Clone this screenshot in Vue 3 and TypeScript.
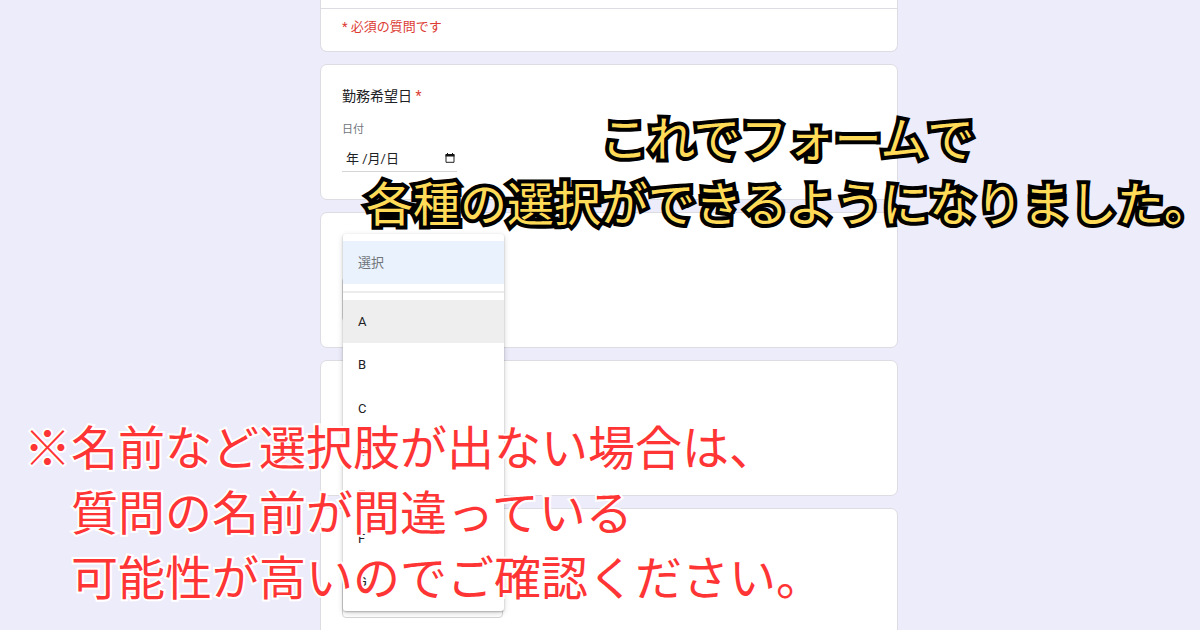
<script setup lang="ts">
import { ref } from 'vue'

const choices: string[] = ['A', 'B', 'C', 'D', 'E', 'F', 'G']
const highlighted = ref('A')
const dateValue = ref('年 /月/日')
</script>

<template>
  <main class="page">
    <form class="form" @submit.prevent>
      <section class="card intro">
        <p class="required-note">* 必須の質問です</p>
      </section>

      <section class="card question">
        <h2 class="title">勤務希望日 <span class="star">*</span></h2>
        <label class="hint" for="date">日付</label>
        <div class="date-field">
          <input id="date" v-model="dateValue" type="text" />
          <button type="button" class="calendar" aria-label="カレンダーを開く">
            <svg viewBox="0 0 10 10" aria-hidden="true">
              <path d="M1 2.2V9.3H9V2.2" fill="none" stroke="#222" stroke-width="1" />
              <path d="M.5 1H9.5V3.4H.5ZM2 0H3V1H2ZM7 0H8V1H7Z" fill="#111" />
            </svg>
          </button>
        </div>
      </section>

      <section class="card question">
        <div class="picker">
          <button type="button" class="select-box" aria-label="選択" aria-expanded="true"></button>
          <div class="menu" role="listbox" aria-label="選択">
            <button type="button" class="option placeholder" role="option" aria-selected="true">選択</button>
            <hr />
            <div class="choices">
              <button
                v-for="choice in choices"
                :key="choice"
                type="button"
                role="option"
                aria-selected="false"
                class="option"
                :class="{ active: highlighted === choice }"
                @mouseenter="highlighted = choice"
              >{{ choice }}</button>
            </div>
          </div>
        </div>
      </section>

      <section class="card question"></section>

      <section class="card question">
        <div class="picker">
          <button type="button" class="select-box" aria-label="選択"></button>
        </div>
      </section>
    </form>

    <p class="caption done">
      <span class="lead">これでフォームで</span>
      <span>各種の選択ができるようになりました。</span>
    </p>
    <p class="caption notice">
      <span>※名前など選択肢が出ない場合は、</span>
      <span class="indent">質問の名前が間違っている</span>
      <span class="indent">可能性が高いのでご確認ください。</span>
    </p>
  </main>
</template>

<style>
body {
  margin: 0;
  background: #edecfb;
}
</style>

<style scoped>
.page {
  position: relative;
  box-sizing: border-box;
  height: 100vh;
  padding-left: 18px;
  overflow: hidden;
  background: #edecfb;
  color: #202124;
  font-family: Roboto, "Noto Sans CJK JP", sans-serif;
}
.form {
  display: flex;
  flex-direction: column;
  gap: 12px;
  max-width: 578px;
  margin: 0 auto;
}
.card {
  box-sizing: border-box;
  background: #fff;
  border: 1px solid #dddce3;
  border-radius: 7px;
}
.intro {
  padding-top: 8px;
  border-top: 0;
  border-radius: 0 0 7px 7px;
}
.required-note {
  margin: 0;
  padding: 8px 21px 14px;
  border-top: 1px solid #dddce3;
  color: #dc3c34;
  font-size: 13px;
  line-height: 20px;
}
.question {
  min-height: 136px;
  padding: 21px;
}
.title {
  margin: 0 0 16px;
  font-size: 14px;
  line-height: 20px;
  font-weight: 400;
}
.star {
  color: #dc3c34;
}
.hint {
  display: block;
  color: #70757a;
  font-size: 11px;
  line-height: 16px;
}
.date-field {
  display: flex;
  align-items: center;
  box-sizing: border-box;
  width: 115px;
  height: 34px;
  padding: 6px 2px 0 4px;
  border-bottom: 1px solid #d5d5d5;
}
.date-field input {
  flex: 1;
  min-width: 0;
  padding: 0;
  border: 0;
  outline: 0;
  background: none;
  color: #202124;
  font: inherit;
  font-size: 13px;
}
.calendar {
  width: 10px;
  height: 10px;
  padding: 0;
  border: 0;
  background: none;
}
.calendar svg {
  display: block;
}
.picker {
  position: relative;
  width: 161px;
  padding-top: 43px;
}
.select-box {
  display: block;
  width: 100%;
  height: 45px;
  border: 1px solid #d5d5d8;
  border-radius: 4px;
  background: #fff;
}
.menu {
  position: absolute;
  z-index: 1;
  top: 0;
  left: 1px;
  width: 161px;
  box-sizing: border-box;
  padding: 7px 0 8px;
  border-radius: 3px;
  background: #fff;
  box-shadow: 0 1px 2px rgba(0, 0, 0, 0.26), 0 2px 6px rgba(0, 0, 0, 0.16);
}
.menu hr {
  height: 2px;
  margin: 7px 0;
  border: 0;
  background: #ececec;
}
.choices {
  display: grid;
  grid-auto-rows: 1fr;
  min-height: 303px;
}
.option {
  display: block;
  width: 100%;
  padding: 0 15px;
  border: 0;
  background: none;
  color: #202124;
  font: inherit;
  font-size: 13px;
  text-align: left;
}
.placeholder {
  height: 43px;
  padding-bottom: 2px;
  background: #eaf2fd;
  color: #70757a;
}
.active {
  background: #eee;
}
.caption {
  position: absolute;
  z-index: 2;
  margin: 0;
  font-family: "Noto Sans CJK JP", sans-serif;
  font-feature-settings: "halt";
  font-size: 47px;
  line-height: 65px;
  white-space: nowrap;
  paint-order: stroke fill;
  pointer-events: none;
}
.caption span {
  display: block;
}
.done {
  top: 103px;
  left: 366px;
  color: #ffdb58;
  -webkit-text-stroke: 8px #000;
}
.notice {
  top: 412px;
  left: 24px;
  color: #ff3434;
  -webkit-text-stroke: 4px #fff;
}
.caption .lead {
  padding-left: 5em;
}
.caption .indent {
  padding-left: 1em;
}
</style>
